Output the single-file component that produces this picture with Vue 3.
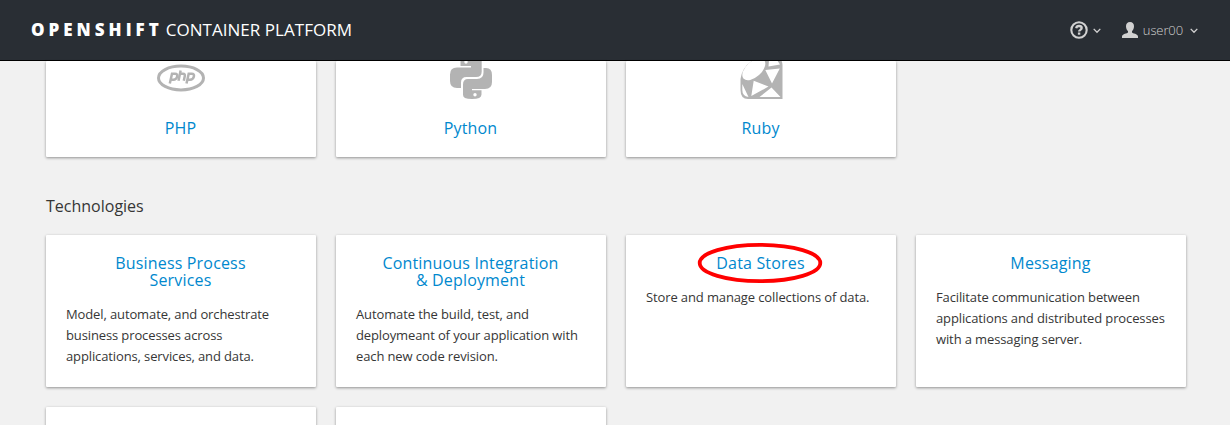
<script setup>
const languages = [
  { name: 'PHP', icon: 'php' },
  { name: 'Python', icon: 'python' },
  { name: 'Ruby', icon: 'ruby' },
]
const technologies = [
  { lines: ['Business Process', 'Services'], text: ['Model, automate, and orchestrate', 'business processes across', 'applications, services, and data.'] },
  { lines: ['Continuous Integration', '& Deployment'], text: ['Automate the build, test, and', 'deploymeant of your application with', 'each new code revision.'] },
  { lines: ['Data Stores'], text: ['Store and manage collections of data.'], circled: true },
  { lines: ['Messaging'], text: ['Facilitate communication between', 'applications and distributed processes', 'with a messaging server.'] },
]
</script>

<template>
  <div class="page">
    <header class="navbar">
      <div class="brand"><strong>OPENSHIFT</strong><span>CONTAINER PLATFORM</span></div>
      <nav class="tools">
        <svg class="help" width="18" height="18" viewBox="0 0 18 18">
          <circle cx="9" cy="9" r="7.700" fill="none" stroke="#d1d1d1" stroke-width="2.100" />
          <path d="M6.200 7.200C6.500 5.500 7.600 5 9 5c1.600 0 2.700.8 2.700 2.100 0 1.800-2.600 1.700-2.600 3.500" fill="none" stroke="#d1d1d1" stroke-width="2.300" />
          <rect x="7.900" y="11.500" width="2.400" height="2.200" fill="#d1d1d1" />
        </svg>
        <svg class="caret" width="8" height="6" viewBox="0 0 8 6"><path d="M.7.9 4 4.300 7.300.9" /></svg>
        <svg class="person" width="16" height="16" viewBox="0 0 16 16">
          <path d="M8 0c2.600 0 4 1.700 4 4.300 0 2.300-.9 3.900-2 4.900v1.300c.5 1 5.900 1.300 6 4v1.500H0v-1.500c.1-2.700 5.500-3 6-4V9.200c-1.100-1-2-2.600-2-4.900C4 1.700 5.400 0 8 0z" fill="#d1d1d1" />
        </svg>
        <span class="user">user00</span>
        <svg class="caret" width="8" height="6" viewBox="0 0 8 6"><path d="M.7.9 4 4.300 7.300.9" /></svg>
      </nav>
    </header>
    <main class="content">
      <section class="grid languages">
        <article v-for="l in languages" :key="l.name" class="card language">
          <svg v-if="l.icon === 'php'" class="icon" width="48" height="42" viewBox="0 0 48 42">
            <ellipse cx="24" cy="21" rx="22.500" ry="11.900" fill="none" stroke="#b3b3b3" stroke-width="3" />
            <g fill="none" stroke="#b3b3b3" stroke-width="2.500">
              <path d="M12.800 26.500 15 16.800h3c2 0 2.600 1 2.200 2.700-.5 2.200-1.700 3.200-3.900 3.200h-2.300" />
              <path d="M23.600 13.500 21.500 23.800M22.700 16.800h3.200c1.900 0 2.200.9 1.900 2.200l-1 4.800" />
              <path d="M29.500 26.500l2.200-9.700h3c2 0 2.600 1 2.200 2.700-.5 2.200-1.700 3.200-3.900 3.200h-2.300" />
            </g>
          </svg>
          <svg v-else-if="l.icon === 'python'" class="icon" width="42" height="42" viewBox="0 0 42 42">
            <g fill="#b3b3b3" fill-rule="evenodd">
              <path d="M10.500 4.500Q10.500 0 21 0T31.700 4.500V14.500Q31.700 20 26 20H16.500Q11 20 11 25.500V31H7Q0 31 0 24V17.500Q0 10.500 7 10.500H21V9H10.500ZM16 3.300a1.700 1.700 0 1 0 0 3.400 1.700 1.700 0 0 0 0-3.400Z" />
              <path d="M31.500 37.500Q31.500 42 22 42T13 37.500V27.500Q13 22 18 22H27Q33.500 22 33.500 15.500V11H36Q42 11 42 18V25Q42 32 35 32H22V33.200H31.500ZM25 36a1.700 1.700 0 1 0 0 3.400 1.700 1.700 0 0 0 0-3.400Z" />
            </g>
          </svg>
          <svg v-else class="icon" width="43" height="42" viewBox="0 0 43 42">
            <path d="M.5 22Q3 6 20 0H35Q42 0 42.500 8V42H8Q.5 42 .5 33Z" fill="#b3b3b3" />
            <g fill="#fff">
              <ellipse cx="13.800" cy="12.300" rx="13.800" ry="7.800" transform="rotate(-42 13.800 12.300)" />
              <path d="M25.300 13 39.800 11.500 32 26.500ZM13.700 23.700 28.500 29.600 11.300 39ZM19.500 40 31.500 30.500 40.500 40ZM2.300 27 8.500 40Q2.300 39 2.300 33ZM28.500 9.500 29 3H37L40 7.500Z" />
            </g>
          </svg>
          <h3>{{ l.name }}</h3>
        </article>
      </section>
      <h2>Technologies</h2>
      <section class="grid technologies">
        <article v-for="t in technologies" :key="t.lines[0]" class="card technology">
          <h3><span v-for="line in t.lines" :key="line">{{ line }}</span></h3>
          <p><span v-for="line in t.text" :key="line">{{ line }}</span></p>
          <svg v-if="t.circled" class="ring" width="126" height="42" viewBox="0 0 126 42"><ellipse cx="63" cy="21" rx="60.300" ry="18.200" fill="none" stroke="#f00" stroke-width="3.800" /></svg>
        </article>
        <article class="card next"></article>
        <article class="card next"></article>
      </section>
    </main>
  </div>
</template>

<style>
body { margin: 0; overflow: hidden; background: #f1f1f1; }
</style>
<style scoped>
.page { width: 1230px; height: 425px; overflow: hidden; background: #f1f1f1; font-family: "Open Sans", sans-serif; color: #363636; }
.navbar { box-sizing: border-box; height: 61px; padding: 0 32px 0 31px; display: flex; justify-content: space-between; align-items: center; background: #292e34; border-bottom: 1px solid #000; }
.brand { display: flex; align-items: center; color: #fff; font-size: 17px; line-height: 24px; white-space: nowrap; }
.brand strong { font-weight: 800; letter-spacing: 4px; margin-right: 3px; }
.brand span { font-weight: 400; letter-spacing: .03px; }
.tools { display: flex; align-items: center; }
.caret { margin-top: 2px; fill: none; stroke: #d1d1d1; stroke-width: 1.300; }
.help { margin-right: 5px; }
.person { margin-left: 21px; margin-right: 5px; }
.user { font-size: 13px; font-weight: 300; line-height: 20px; letter-spacing: -.1px; color: #d1d1d1; margin-right: 7px; }
.content { padding: 0 44px 0 46px; }
.grid { display: grid; grid-template-columns: repeat(4, 270px); gap: 20px; }
.card { box-sizing: border-box; background: #fff; border-radius: 1px; box-shadow: 0 1px 3px rgba(0, 0, 0, .4); }
.languages { height: 96px; }
.language { overflow: hidden; display: flex; flex-direction: column; justify-content: flex-end; align-items: center; height: 96px; padding-bottom: 20px; }
.icon { flex: none; display: block; margin-bottom: 21px; }
h2, h3, p { margin: 0; font-weight: 400; }
h3 { font-size: 16px; line-height: 17px; letter-spacing: .17px; color: #0088ce; text-align: center; padding-right: 1px; }
h2 { font-size: 16px; line-height: 18px; margin-top: 40px; margin-bottom: 20px; }
.technology { position: relative; height: 152px; padding: 20px; }
.technology span { display: block; white-space: nowrap; }
p { margin-top: 15px; font-size: 13px; line-height: 21px; letter-spacing: -.12px; }
.ring { position: absolute; left: 71px; top: 7px; }
.next { height: 152px; }
</style>
